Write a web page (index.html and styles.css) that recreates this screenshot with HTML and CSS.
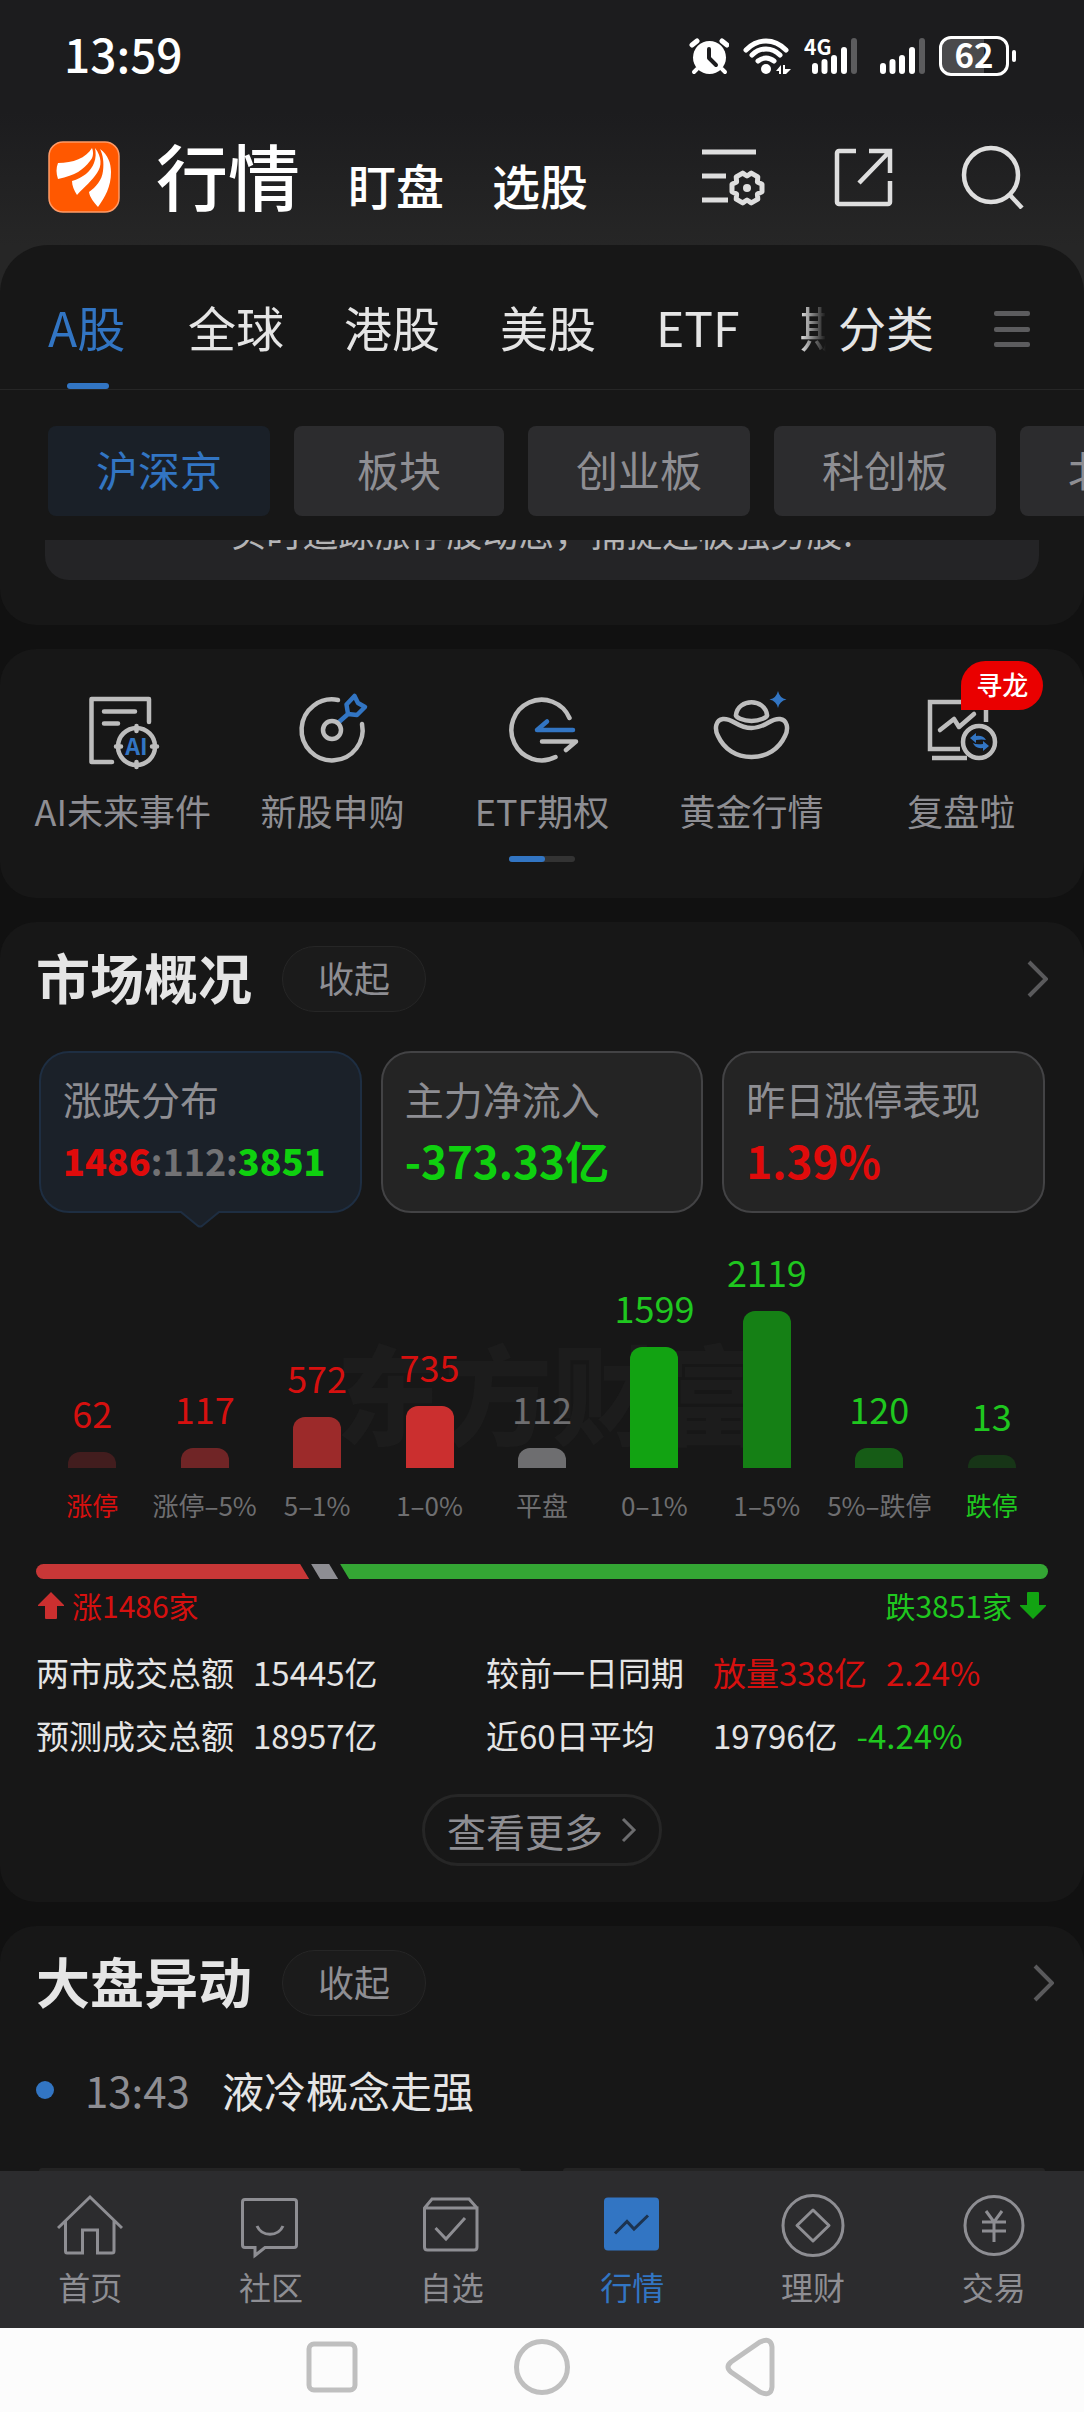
FILE: index.html
```html
<!DOCTYPE html>
<html lang="zh-CN">
<head>
<meta charset="utf-8">
<meta name="viewport" content="width=device-width, initial-scale=1">
<title>行情</title>
<link rel="stylesheet" href="styles.css">
</head>
<body>
<div class="app">
  <header class="top">
    <div class="status">
      <time class="clock">13:59</time>
      <div class="status-icons">
        <svg width="40" height="38" viewBox="0 0 40 38"><circle cx="20.500" cy="20.500" r="16.500" fill="#fff"/><g stroke="#fff" stroke-width="5" stroke-linecap="round"><path d="M3 8L8 4M38 8L33 4"/><path d="M8 32L5 35M33 32L36 35" stroke-width="4"/></g><path d="M20 12V21L27 28" fill="none" stroke="#1c1c1e" stroke-width="4" stroke-linecap="round" stroke-linejoin="round"/></svg>
        <svg class="wifi" width="50" height="38" viewBox="0 0 50 38"><g fill="none" stroke="#fff" stroke-width="5" stroke-linecap="round"><path d="M4 13C16 1 32 1 44 13"/><path d="M10 18C18 10 30 10 38 18"/><path d="M16 24C21 20 27 20 32 24"/></g><circle cx="24" cy="32" r="5" fill="#fff"/><path d="M34 34L39 28V37H37V34zM41 28H43V32H49L44 37H41z" fill="#fff"/></svg>
        <svg class="cell" width="54" height="38" viewBox="0 0 54 38"><text x="0" y="18" font-size="21" font-weight="700" fill="#fff">4G</text><g stroke="#fff" stroke-width="6" stroke-linecap="round"><path d="M11 29V34M20.500 25V34M30 21V34M40 13V34"/><path d="M50 4V34" stroke="#5c5c5e"/></g></svg>
        <svg class="cell2" width="46" height="38" viewBox="0 0 46 38"><g stroke="#fff" stroke-width="6" stroke-linecap="round"><path d="M3 29V34M12.500 25V34M22 21V34M32 13V34"/><path d="M42 4V34" stroke="#5c5c5e"/></g></svg>
        <span class="battery">62</span><span class="battery-nub"></span>
      </div>
    </div>
    <div class="titlebar">
      <svg class="logo" width="72" height="72" viewBox="0 0 72 72"><rect x="1" y="1" width="70" height="70" rx="14" fill="#ff5800" stroke="#ff9a66" stroke-width="1.500"/><g fill="#fff"><path d="M10 22C25 22 38 17 44 7C46 12 45 17 42 20C35 29 28 34 10 38C8 32 8 27 10 22Z"/><path d="M47 7C54 16 54 25 49 32C44 40 37 45 29 54C26 49 24 45 24 40C35 37 43 30 46 22C48 17 48 12 47 7Z"/><path d="M52 8C60 14 63 22 63 31C63 46 57 56 50 66C46 61 42 57 41 51C48 46 54 39 55 30C56 21 55 14 52 8Z"/></g></svg>
      <nav class="sections"><a class="current" href="#quotes">行情</a><a href="#watch">盯盘</a><a href="#pick">选股</a></nav>
      <div class="tools">
        <button aria-label="列表设置"><svg width="64" height="60" viewBox="0 0 64 60"><g fill="none" stroke="#dedede" stroke-width="5"><path d="M1 5H55M1 29H25M1 53H27"/><path stroke-linejoin="round" d="M61 37.300L56.400 35L56.800 29.900L50.300 26.100L46 29L41.700 26.100L35.200 29.900L35.600 35L31 37.300V44.800L35.600 47L35.200 52.100L41.700 55.900L46 53L50.300 55.900L56.800 52.100L56.400 47L61 44.800Z"/></g><circle cx="46" cy="41" r="4" fill="#dedede"/></svg></button>
        <button aria-label="分享"><svg width="60" height="60" viewBox="0 0 60 60"><path d="M23 4H6a2 2 0 0 0-2 2v49a2 2 0 0 0 2 2h49a2 2 0 0 0 2-2V34M36 4H57V26M57 4L26 36" fill="none" stroke="#dedede" stroke-width="4.500"/></svg></button>
        <button aria-label="搜索"><svg width="64" height="64" viewBox="0 0 64 64"><g fill="none" stroke="#dedede" stroke-width="4.500"><circle cx="30" cy="30" r="27"/><path d="M48 49L61 63"/></g></svg></button>
      </div>
    </div>
  </header>

  <main class="content">
    <section class="card markets">
      <div class="tabs">
        <nav class="tab-strip"><a class="tab active" href="#a">A股</a><a class="tab" href="#global">全球</a><a class="tab" href="#hk">港股</a><a class="tab" href="#us">美股</a><a class="tab" href="#etf">ETF</a><a class="tab" href="#futures">期货</a></nav>
        <a class="tab" href="#all">分类</a>
        <button class="menu" aria-label="菜单"><i></i><i></i><i></i></button>
      </div>
      <div class="chips"><button class="chip on">沪深京</button><button class="chip">板块</button><button class="chip">创业板</button><button class="chip">科创板</button><button class="chip">北交所</button></div>
      <div class="notice"><p>实时追踪涨停股动态，捕捉连板强势股!</p></div>
    </section>

    <section class="card shortcuts">
      <div class="shortcut-row">
        <a class="shortcut" href="#ai"><svg width="84" height="84" viewBox="0 0 84 84"><g fill="none" stroke="#bdbdbd" stroke-width="4.500" stroke-linecap="round" stroke-linejoin="round"><path d="M68 32V9H10.500V72H31M23 21.500H54M23 33.500H37"/><circle cx="55.500" cy="56.500" r="18.500"/><path d="M55.500 36V41M55.500 72V77M35 56.500H40M71 56.500H76"/></g><text x="55.500" y="65" text-anchor="middle" font-size="23" font-weight="700" fill="#3275c3">AI</text></svg><span>AI未来事件</span></a>
        <a class="shortcut" href="#ipo"><svg width="84" height="84" viewBox="0 0 84 84"><g fill="none" stroke-width="4.500" stroke-linecap="round" stroke-linejoin="round"><path d="M49 32L58 24L56.500 14.500L64.500 6L68 13L75 17L67 25L58 24" stroke="#3275c3"/><circle cx="42" cy="40" r="9" stroke="#bdbdbd"/><path d="M48 10A30.500 30.500 0 1 0 72 34" stroke="#bdbdbd"/></g></svg><span>新股申购</span></a>
        <a class="shortcut" href="#option"><svg width="84" height="84" viewBox="0 0 84 84"><g fill="none" stroke-width="4.500" stroke-linecap="round" stroke-linejoin="round"><path d="M69.500 28A30.300 30.300 0 1 0 55.500 67M42 51.500H76L66 60" stroke="#bdbdbd"/><path d="M73 40H37L47 31.500" stroke="#3275c3"/></g></svg><span>ETF期权</span></a>
        <a class="shortcut" href="#gold"><svg width="84" height="84" viewBox="0 0 84 84"><g fill="none" stroke="#bdbdbd" stroke-width="4.500" stroke-linejoin="round"><path d="M26 25C28 8 55 8 57 25C58 27 50 31 41.500 31C33 31 25 27 26 25Z"/><path d="M13 29C6 30 4 38 8 46C14 59 26 67 41.500 67C57 67 69 59 75 46C79 38 77 30 70 29C60 28 56 38 41.500 38C27 38 23 28 13 29Z"/></g><path d="M68 1Q69.500 8 76.500 9.500Q69.500 11 68 18Q66.500 11 59.500 9.500Q66.500 8 68 1Z" fill="#3275c3"/></svg><span>黄金行情</span></a>
        <a class="shortcut" href="#replay"><svg width="84" height="84" viewBox="0 0 84 84"><g fill="none" stroke="#bdbdbd" stroke-width="4.500"><path d="M67 32V12H11V59H41M13 68H48"/><path d="M21 40L35 29L40 37L55 24" stroke-linecap="round" stroke-linejoin="round"/><circle cx="60" cy="52" r="16"/></g><g fill="#3275c3"><path d="M51 48L57 43V46Q64 45 67 50Q63 49 57 50V53Z"/><path d="M70 56L64 51V54Q57 55 54 53Q56 59 64 58V61Z"/></g></svg><span>复盘啦</span><em class="badge">寻龙</em></a>
      </div>
      <div class="pager"><i></i></div>
    </section>

    <section class="card overview">
      <div class="card-head"><h2>市场概况</h2><button class="fold">收起</button><a class="more" href="#overview" aria-label="更多"><svg width="22" height="40" viewBox="0 0 22 40"><path d="M3 3L20 20L3 37" fill="none" stroke="#5a5a5c" stroke-width="4"/></svg></a></div>
      <div class="metrics">
        <button class="metric selected"><span>涨跌分布</span><strong class="ratio-text"><b class="up">1486</b>:112:<b class="down">3851</b></strong><svg class="pointer" width="42" height="17" viewBox="0 0 42 17"><path d="M0 0H42V2H40L23 15Q21 16 19 15L2 2H0Z" fill="#1b2129"/><path d="M0 1H2L19 15Q21 16 23 15L40 1H42" fill="none" stroke="#1e2e42" stroke-width="2"/></svg></button>
        <button class="metric"><span>主力净流入</span><strong class="down">-373.33亿</strong></button>
        <button class="metric"><span>昨日涨停表现</span><strong class="up">1.39%</strong></button>
      </div>
      <div class="chart">
        <div class="watermark" aria-hidden="true">东方财富</div>
        <div class="bar-col up"><b>62</b><i class="bar r1" style="height:16px"></i><span class="up">涨停</span></div>
        <div class="bar-col up"><b>117</b><i class="bar r2" style="height:20px"></i><span>涨停–5%</span></div>
        <div class="bar-col up"><b>572</b><i class="bar r3" style="height:51px"></i><span>5–1%</span></div>
        <div class="bar-col up"><b>735</b><i class="bar r4" style="height:62px"></i><span>1–0%</span></div>
        <div class="bar-col flat"><b>112</b><i class="bar r5" style="height:20px"></i><span>平盘</span></div>
        <div class="bar-col down"><b>1599</b><i class="bar g4" style="height:121px"></i><span>0–1%</span></div>
        <div class="bar-col down"><b>2119</b><i class="bar g3" style="height:157px"></i><span>1–5%</span></div>
        <div class="bar-col down"><b>120</b><i class="bar g2" style="height:20px"></i><span>5%–跌停</span></div>
        <div class="bar-col down"><b>13</b><i class="bar g1" style="height:13px"></i><span class="down">跌停</span></div>
      </div>
      <div class="split"><i class="split-up" style="flex-grow:1486"></i><i class="split-flat" style="flex-grow:112"></i><i class="split-down" style="flex-grow:3851"></i></div>
      <div class="legend">
        <span class="up"><svg width="26" height="27" viewBox="0 0 26 27"><path d="M13 0L26 13V14H19V26Q19 27 18 27H8Q7 27 7 26V14H0V13Z" fill="#cb2f2f"/></svg>涨1486家</span>
        <span class="down">跌3851家<svg width="26" height="27" viewBox="0 0 26 27"><path d="M13 27L26 14V13H19V1Q19 0 18 0H8Q7 0 7 1V13H0V14Z" fill="#12a312"/></svg></span>
      </div>
      <dl class="stats">
        <dt>两市成交总额</dt><dd>15445亿</dd><dt>较前一日同期</dt><dd><span class="up">放量338亿</span><span class="up">2.24%</span></dd>
        <dt>预测成交总额</dt><dd>18957亿</dd><dt>近60日平均</dt><dd><span>19796亿</span><span class="down">-4.24%</span></dd>
      </dl>
      <button class="view-more">查看更多<svg width="16" height="26" viewBox="0 0 16 26"><path d="M2 2L13 13L2 24" fill="none" stroke="#6c6c6e" stroke-width="3"/></svg></button>
    </section>

    <section class="card moves">
      <div class="card-head"><h2>大盘异动</h2><button class="fold">收起</button><a class="more" href="#moves" aria-label="更多"><svg width="22" height="40" viewBox="0 0 22 40"><path d="M3 3L20 20L3 37" fill="none" stroke="#5a5a5c" stroke-width="4"/></svg></a></div>
      <a class="event" href="#event"><i></i><time>13:43</time><span>液冷概念走强</span></a>
      <div class="peek"><i></i><i></i></div>
    </section>
  </main>

  <nav class="bottom-nav">
    <a href="#home"><svg width="66" height="66" viewBox="0 0 66 66"><path d="M1 35L33 4L65 35M8.500 28V58Q8.500 60 10 60H25.500V37H40.500V60H55Q57 60 57 58V28"/></svg>首页</a>
    <a href="#community"><svg width="66" height="66" viewBox="0 0 66 66"><path d="M7 6.500H56Q58.500 6.500 58.500 9V52Q58.500 54.500 56 54.500H27L17 62.500V54.500H7Q4.500 54.500 4.500 52V9Q4.500 6.500 7 6.500ZM19 33C24 44 40 44 45 33"/></svg>社区</a>
    <a href="#mine"><svg width="66" height="66" viewBox="0 0 66 66"><path d="M5.500 15H58V54Q58 57 55 57H8.500Q5.500 57 5.500 54V15L13 6H50L58 15M16.500 35L27 46L46 25"/></svg>自选</a>
    <a class="active" href="#quotes"><svg width="66" height="66" viewBox="0 0 66 66"><rect x="5" y="4.500" width="55" height="53" rx="4" fill="#3275c3" stroke="none"/><path d="M16 40.500L28 28.500L35 36L49 22.500" stroke="#1c3350"/></svg>行情</a>
    <a href="#wealth"><svg width="66" height="66" viewBox="0 0 66 66"><circle cx="33" cy="32.500" r="30"/><path d="M33 17L49 32.500L33 48L17 32.500Z" stroke-linejoin="round"/></svg>理财</a>
    <a href="#trade"><svg width="66" height="66" viewBox="0 0 66 66"><circle cx="33" cy="32.500" r="29"/><path d="M25 18L33 29L41 18M33 29V49M21 29H45M21 38H45"/></svg>交易</a>
  </nav>
  <div class="system-nav">
    <button aria-label="最近任务"><svg width="60" height="60" viewBox="0 0 60 60"><rect x="7" y="7" width="46" height="46" rx="5"/></svg></button>
    <button aria-label="主页"><svg width="60" height="60" viewBox="0 0 60 60"><circle cx="30" cy="30" r="25.500"/></svg></button>
    <button aria-label="返回"><svg width="60" height="60" viewBox="0 0 60 60"><path d="M9 25L38 5Q49 0 50 10V50Q49 60 38 55L9 35Q3 30 9 25Z"/></svg></button>
  </div>
</div>
</body>
</html>
```
FILE: styles.css
```css
* { box-sizing: border-box; }
body { margin: 0; background: #111; color: #e5e5e5; font-family: "Noto Sans CJK SC", "Noto Sans", sans-serif; }
a { color: inherit; text-decoration: none; }
button { margin: 0; padding: 0; border: 0; background: none; color: inherit; font: inherit; cursor: pointer; }
svg { display: block; flex: none; }
i, em { font-style: normal; }
.up { color: #d6100f; }
.down { color: #1fc71f; }
.flat { color: #6e6e70; }

.app { display: flex; flex-direction: column; min-height: 100vh; overflow: hidden; background: linear-gradient(#1c1c1e 112px, #262626 245px, #262626 320px, #111 320px); }
.status { display: flex; justify-content: space-between; align-items: center; height: 112px; padding: 0 68px 0 64px; color: #fff; }
.clock { font-size: 46px; font-weight: 500; line-height: 60px; padding-bottom: 6px; }
.status-icons { display: flex; align-items: center; }
.wifi { margin-left: 13px; }
.cell { margin-left: 12px; }
.cell2 { margin-left: 22px; }
.battery { width: 70px; height: 40px; margin-left: 13px; border: 3px solid #fff; border-radius: 12px; background: linear-gradient(90deg, #4a4a4c 66%, transparent 66%); font-size: 33px; font-weight: 700; line-height: 30px; text-align: center; }
.battery-nub { width: 4px; height: 12px; margin-left: 3px; border-radius: 2px; background: #fff; }

.titlebar { display: flex; align-items: center; height: 133px; padding: 0 59px 3px 48px; color: #fff; }
.sections { display: flex; align-items: baseline; gap: 48px; margin-left: 36px; padding-top: 3px; font-size: 48px; font-weight: 500; line-height: 100px; }
.sections .current { font-size: 72px; }
.tools { display: flex; align-items: center; gap: 68px; margin-left: auto; }

.content { display: flex; flex: 1; flex-direction: column; gap: 24px; }
.card { border-radius: 36px; background: #171717; }
.markets { border-top-left-radius: 48px; border-top-right-radius: 48px; padding-bottom: 45px; }
.tabs { display: flex; height: 145px; padding: 51px 54px 0 0; border-bottom: 1px solid #262626; font-size: 48px; line-height: 60px; }
.tab-strip { display: flex; flex: 1; gap: 60px; height: 93px; min-width: 0; padding-left: 48px; margin-right: 12px; overflow: hidden; mask-image: linear-gradient(90deg, #000 calc(100% - 26px), transparent); }
.tab { position: relative; flex: none; }
.tab.active { min-width: 80px; color: #3275c3; }
.tab.active::after { content: ""; position: absolute; left: 19px; bottom: 0; width: 42px; height: 6px; border-radius: 3px; background: #3275c3; }
.menu { display: flex; flex-direction: column; justify-content: space-between; width: 36px; height: 36px; margin: 15px 0 0 60px; }
.menu i { width: 36px; height: 5px; border-radius: 2px; background: #5c5c5e; }
.chips { display: flex; gap: 24px; padding: 36px 0 24px 48px; overflow: hidden; }
.chip { flex: none; min-width: 210px; height: 90px; padding: 0 48px 4px; border-radius: 8px; background: #2c2c2e; color: #8e8e93; font-size: 42px; line-height: 60px; }
.chip.on { background: #1a2028; color: #3275c3; }
.notice { display: flex; align-items: flex-end; justify-content: center; height: 40px; margin: 0 45px; padding-bottom: 27px; border-radius: 0 0 24px 24px; background: #242426; color: #b4b4b6; font-size: 36px; line-height: 44px; overflow: hidden; }
.notice p { flex: none; margin: 0; }

.shortcuts { position: relative; padding: 41px 18px 36px; }
.shortcut-row { display: grid; grid-template-columns: repeat(5, 1fr); }
.shortcut { position: relative; display: flex; flex-direction: column; align-items: center; gap: 12px; color: #8e8e93; font-size: 36px; line-height: 48px; white-space: nowrap; }
.badge { position: absolute; left: 50%; top: -29px; height: 49px; padding: 0 15px; border-radius: 25px 25px 25px 0; background: #ea0000; color: #fff; font-size: 26px; font-weight: 500; line-height: 46px; }
.pager { width: 66px; height: 6px; margin: 22px auto 0; border-radius: 3px; background: #333; }
.pager i { display: block; width: 36px; height: 6px; border-radius: 3px; background: #3275c3; }

.overview, .moves { padding: 24px 36px 36px; }
.card-head { display: flex; align-items: center; height: 66px; }
.card-head h2 { margin: 0; font-size: 54px; font-weight: 700; line-height: 60px; padding-bottom: 4px; }
.fold { width: 144px; height: 66px; margin-left: 30px; padding-bottom: 4px; border: 1px solid #262626; border-radius: 33px; background: #1b1b1b; color: #8e8e93; font-size: 36px; line-height: 48px; }
.more { margin-left: auto; }
.moves .more { margin-right: -6px; }
.metrics { display: grid; grid-template-columns: repeat(3, 1fr); gap: 19px; margin: 39px 3px 0; }
.metric { position: relative; display: flex; flex-direction: column; gap: 6px; height: 162px; padding: 18px 22px; border: 2px solid #434345; border-radius: 30px; background: #242424; color: #8e8e93; font-size: 39px; line-height: 54px; text-align: left; white-space: nowrap; }
.metric strong { font-size: 44px; font-weight: 700; line-height: 58px; }
.metric .ratio-text { color: #727274; font-size: 36px; }
.metric.selected { border-color: #1e2e42; background: #1b2129; }
.metric .up { color: #e00b0b; }
.metric .down { color: #0fd00f; }
.pointer { position: absolute; left: 50%; top: 100%; margin-left: -21px; }

.chart { position: relative; display: grid; grid-template-columns: repeat(9, 1fr); height: 311px; }
.watermark { position: absolute; left: 50%; top: 107px; margin-left: -206px; color: #1c1c1c; font-size: 108px; font-weight: 900; line-height: 140px; white-space: nowrap; }
.bar-col { position: relative; display: flex; flex-direction: column; justify-content: flex-end; align-items: center; white-space: nowrap; }
.bar-col b { margin-bottom: 20px; font-size: 36px; font-weight: 400; line-height: 40px; }
.bar-col span { margin-top: 18px; font-size: 26px; line-height: 38px; }
.bar-col span:not(.up):not(.down) { color: #6e6e70; }
.bar { width: 48px; border-radius: 12px 12px 0 0; }
.r1 { background: #421d1e; }
.r2 { background: #702526; }
.r3 { background: #9c2a2a; }
.r4 { background: #cb2f2f; }
.r5 { background: #6e6e70; }
.g1 { background: #173517; }
.g2 { background: #165c16; }
.g3 { background: #158015; }
.g4 { background: #12a312; }
.split { display: flex; gap: 2px; height: 15px; margin-top: 40px; border-radius: 8px; overflow: hidden; }
.split i { flex-basis: 0; }
.split-up { background: #c83737; clip-path: polygon(0 0, calc(100% - 9px) 0, 100% 100%, 0 100%); }
.split-flat { min-width: 27px; background: #8e8e93; clip-path: polygon(0 0, calc(100% - 9px) 0, 100% 100%, 9px 100%); }
.split-down { background: #34a634; clip-path: polygon(0 0, 100% 0, 100% 100%, 9px 100%); }
.legend { display: flex; justify-content: space-between; margin-top: 6px; padding: 0 2px; font-size: 30px; line-height: 40px; }
.legend span { display: flex; align-items: center; gap: 8px; }
.stats { display: grid; grid-template-columns: 217px 233px 227px 1fr; row-gap: 23px; margin: 27px 0 0; font-size: 33px; line-height: 40px; white-space: nowrap; }
.stats dd { display: flex; gap: 19px; margin: 0; }
.view-more { display: flex; align-items: center; justify-content: center; gap: 18px; width: 240px; height: 72px; margin: 39px auto 0; border: 3px solid #262626; border-radius: 36px; color: #8e8e93; font-size: 39px; line-height: 60px; }

.moves { display: flex; flex: 1; flex-direction: column; padding-bottom: 0; border-radius: 36px 36px 0 0; }
.event { display: flex; align-items: center; margin-top: 44px; font-size: 42px; line-height: 60px; }
.event i { width: 18px; height: 18px; border-radius: 50%; background: #3275c3; }
.event time { margin-left: 31px; color: #8e8e93; }
.event span { margin-left: 32px; }
.peek { display: grid; grid-template-columns: 1fr 1fr; gap: 42px; margin: auto 3px 0; }
.peek i { height: 3px; border-radius: 6px 6px 0 0; background: #242424; }

.bottom-nav { display: grid; grid-template-columns: repeat(6, 1fr); height: 157px; padding-top: 22px; background: #2c2c2e; color: #8e8e93; font-size: 32px; line-height: 44px; }
.bottom-nav a { display: flex; flex-direction: column; align-items: center; gap: 5px; }
.bottom-nav svg { fill: none; stroke: #8e8e93; stroke-width: 3; }
.bottom-nav .active { color: #3275c3; }
.system-nav { display: flex; justify-content: center; align-items: center; gap: 150px; height: 84px; padding-bottom: 6px; background: #fcfcfc; }
.system-nav svg { fill: none; stroke: #bfbfbf; stroke-width: 5; }
```
